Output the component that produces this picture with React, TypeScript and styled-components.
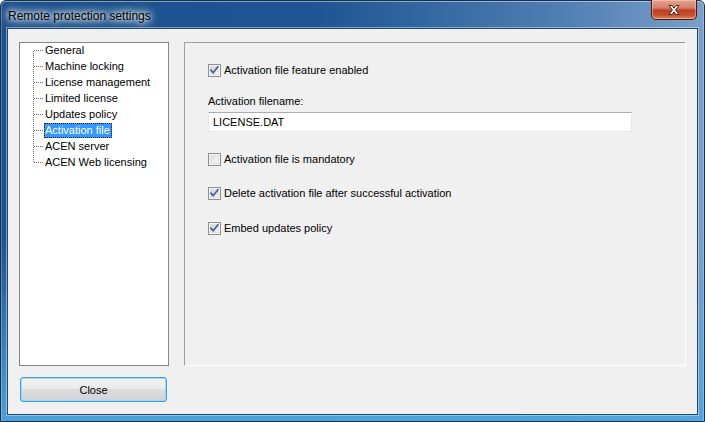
import React from 'react'
import styled, { createGlobalStyle } from 'styled-components'

const GlobalStyle = createGlobalStyle`
  html, body {
    margin: 0;
    padding: 0;
    overflow: hidden;
    background: #ffffff;
  }
  * {
    box-sizing: border-box;
  }
`

const Window = styled.div`
  width: 705px;
  height: 422px;
  display: flex;
  flex-direction: column;
  border: 1px solid #16304d;
  border-radius: 6px 6px 0 0;
  background:
    linear-gradient(to bottom, rgba(90, 170, 225, 0) 55%, rgba(80, 165, 222, 0.95) 100%),
    linear-gradient(to right, #1b4f8c 0%, #1e5592 45%, #4f7fb3 80%, #7b9fc8 100%);
  box-shadow: inset 0 1px 0 rgba(255, 255, 255, 0.45), inset 1px 0 0 rgba(255, 255, 255, 0.25),
    inset -1px 0 0 rgba(255, 255, 255, 0.25);
  font-family: 'Liberation Sans', Arial, sans-serif;
  font-size: 11px;
  color: #000;
`

const TitleBar = styled.div`
  height: 27px;
  display: flex;
  align-items: flex-start;
  padding-left: 7px;
`

const Title = styled.div`
  margin-top: 8px;
  font-size: 12px;
  line-height: 14px;
  color: #000;
  text-shadow: 0 0 4px rgba(255, 255, 255, 1), 0 0 8px rgba(255, 255, 255, 0.95),
    0 0 12px rgba(255, 255, 255, 0.8), 0 0 16px rgba(255, 255, 255, 0.6);
`

const CloseX = styled.button`
  margin: -1px 7px 0 auto;
  width: 46px;
  height: 20px;
  padding: 0;
  display: flex;
  align-items: center;
  justify-content: center;
  border: 1px solid #4a1a12;
  border-top: none;
  border-radius: 0 0 5px 5px;
  background: linear-gradient(to bottom, #e3a392 0%, #d7806a 40%, #c0401f 55%, #c8502f 80%, #e08a60 100%);
  box-shadow: inset 0 0 0 1px rgba(255, 220, 200, 0.45);
`

const Client = styled.div`
  flex: 1;
  margin: 0 6px 6px 6px;
  border: 1px solid #23476e;
  box-shadow: 0 0 0 1px rgba(200, 225, 245, 0.55);
  background: #f0f0f0;
  padding: 13px 10px 0 11px;
  display: flex;
  flex-direction: column;
`

const Body = styled.div`
  display: flex;
  gap: 15px;
  height: 324px;
`

const Tree = styled.div`
  width: 150px;
  height: 100%;
  border: 1px solid #828790;
  background: #fff;
`

const TreeRow = styled.div`
  display: flex;
  align-items: flex-start;
  height: 16px;
`

const TreeLabel = styled.span<{ $selected?: boolean }>`
  display: inline-block;
  height: 15px;
  line-height: 15px;
  padding: 0 2px 0 1px;
  white-space: nowrap;
  background: ${(p) => (p.$selected ? '#3399ff' : 'transparent')};
  color: ${(p) => (p.$selected ? '#fff' : '#000')};
  outline: ${(p) => (p.$selected ? '1px dotted #1a1a1a' : 'none')};
  outline-offset: -1px;
`

const Panel = styled.div`
  width: 502px;
  height: 100%;
  border-top: 1px solid #a0a0a0;
  border-left: 1px solid #a0a0a0;
  border-right: 1px solid #ffffff;
  border-bottom: 1px solid #ffffff;
  padding: 21px 0 0 23px;
  display: flex;
  flex-direction: column;
`

const CheckRow = styled.label<{ $gap?: number }>`
  display: flex;
  align-items: center;
  gap: 3px;
  height: 13px;
  line-height: 13px;
  margin-top: ${(p) => p.$gap ?? 0}px;
  white-space: nowrap;
`

const FieldLabel = styled.div`
  margin-top: 18px;
  height: 13px;
  line-height: 13px;
`

const TextField = styled.div`
  margin-top: 4px;
  width: 424px;
  height: 20px;
  border: 1px solid #e3e9ef;
  border-top-color: #abadb3;
  background: #fff;
  padding-left: 4px;
  line-height: 18px;
`

const Footer = styled.div`
  display: flex;
  padding-top: 11px;
  padding-left: 1px;
`

const Button = styled.button`
  width: 147px;
  height: 25px;
  border: 1px solid #3c9fdc;
  border-radius: 3px;
  background: linear-gradient(to bottom, #f3f3f3 0%, #ebebeb 45%, #dddddd 50%, #cfd3d8 100%);
  box-shadow: inset 0 0 0 1px rgba(140, 215, 250, 0.8);
  font-family: 'Liberation Sans', Arial, sans-serif;
  font-size: 11px;
  color: #000;
  padding: 0;
`

const Checkbox = ({ checked }: { checked?: boolean }) => (
  <svg width="13" height="13" viewBox="0 0 13 13">
    <defs>
      <linearGradient id={checked ? 'cbOn' : 'cbOff'} x1="0" y1="0" x2="1" y2="1">
        <stop offset="0" stopColor={checked ? '#cbcfd5' : '#dcdee1'} />
        <stop offset="1" stopColor="#f8f8f8" />
      </linearGradient>
    </defs>
    <rect x="0.5" y="0.5" width="12" height="12" fill="#f4f4f4" stroke="#8e8f8f" />
    <rect x="2.5" y="2.5" width="8" height="8" fill={`url(#${checked ? 'cbOn' : 'cbOff'})`} stroke="#dfe1e4" />
    {checked && (
      <path d="M3 6.3 L5.2 8.7 L9.8 3" fill="none" stroke="#4a5f97" strokeWidth="1.8" strokeLinecap="square" />
    )}
  </svg>
)

const Connector = ({ first, last }: { first?: boolean; last?: boolean }) => (
  <svg width="24" height="16" viewBox="0 0 24 16">
    <line
      x1="13.5"
      y1={first ? 8 : 0}
      x2="13.5"
      y2={last ? 8 : 16}
      stroke="#6d6d6d"
      strokeWidth="1"
      strokeDasharray="1 1"
    />
    <line x1="14" y1="7.5" x2="23" y2="7.5" stroke="#6d6d6d" strokeWidth="1" strokeDasharray="1 1" />
  </svg>
)

const treeItems = [
  'General',
  'Machine locking',
  'License management',
  'Limited license',
  'Updates policy',
  'Activation file',
  'ACEN server',
  'ACEN Web licensing',
]

const App = () => {
  return (
    <>
      <GlobalStyle />
      <Window>
        <TitleBar>
          <Title>Remote protection settings</Title>
          <CloseX aria-label="Close window">
            <svg width="16" height="12" viewBox="0 0 16 12">
              <path
                d="M3 1.5 L6 1.5 L8 4.2 L10 1.5 L13 1.5 L9.6 6 L13 10.5 L10 10.5 L8 7.8 L6 10.5 L3 10.5 L6.4 6 Z"
                fill="#ffffff"
                stroke="#3b2a2a"
                strokeWidth="1"
                strokeLinejoin="round"
              />
            </svg>
          </CloseX>
        </TitleBar>
        <Client>
          <Body>
            <Tree>
              {treeItems.map((item, i) => (
                <TreeRow key={item}>
                  <Connector first={i === 0} last={i === treeItems.length - 1} />
                  <TreeLabel $selected={item === 'Activation file'}>{item}</TreeLabel>
                </TreeRow>
              ))}
            </Tree>
            <Panel>
              <CheckRow>
                <Checkbox checked />
                Activation file feature enabled
              </CheckRow>
              <FieldLabel>Activation filename:</FieldLabel>
              <TextField>LICENSE.DAT</TextField>
              <CheckRow $gap={21}>
                <Checkbox />
                Activation file is mandatory
              </CheckRow>
              <CheckRow $gap={21}>
                <Checkbox checked />
                Delete activation file after successful activation
              </CheckRow>
              <CheckRow $gap={22}>
                <Checkbox checked />
                Embed updates policy
              </CheckRow>
            </Panel>
          </Body>
          <Footer>
            <Button>Close</Button>
          </Footer>
        </Client>
      </Window>
    </>
  )
}

export default App
